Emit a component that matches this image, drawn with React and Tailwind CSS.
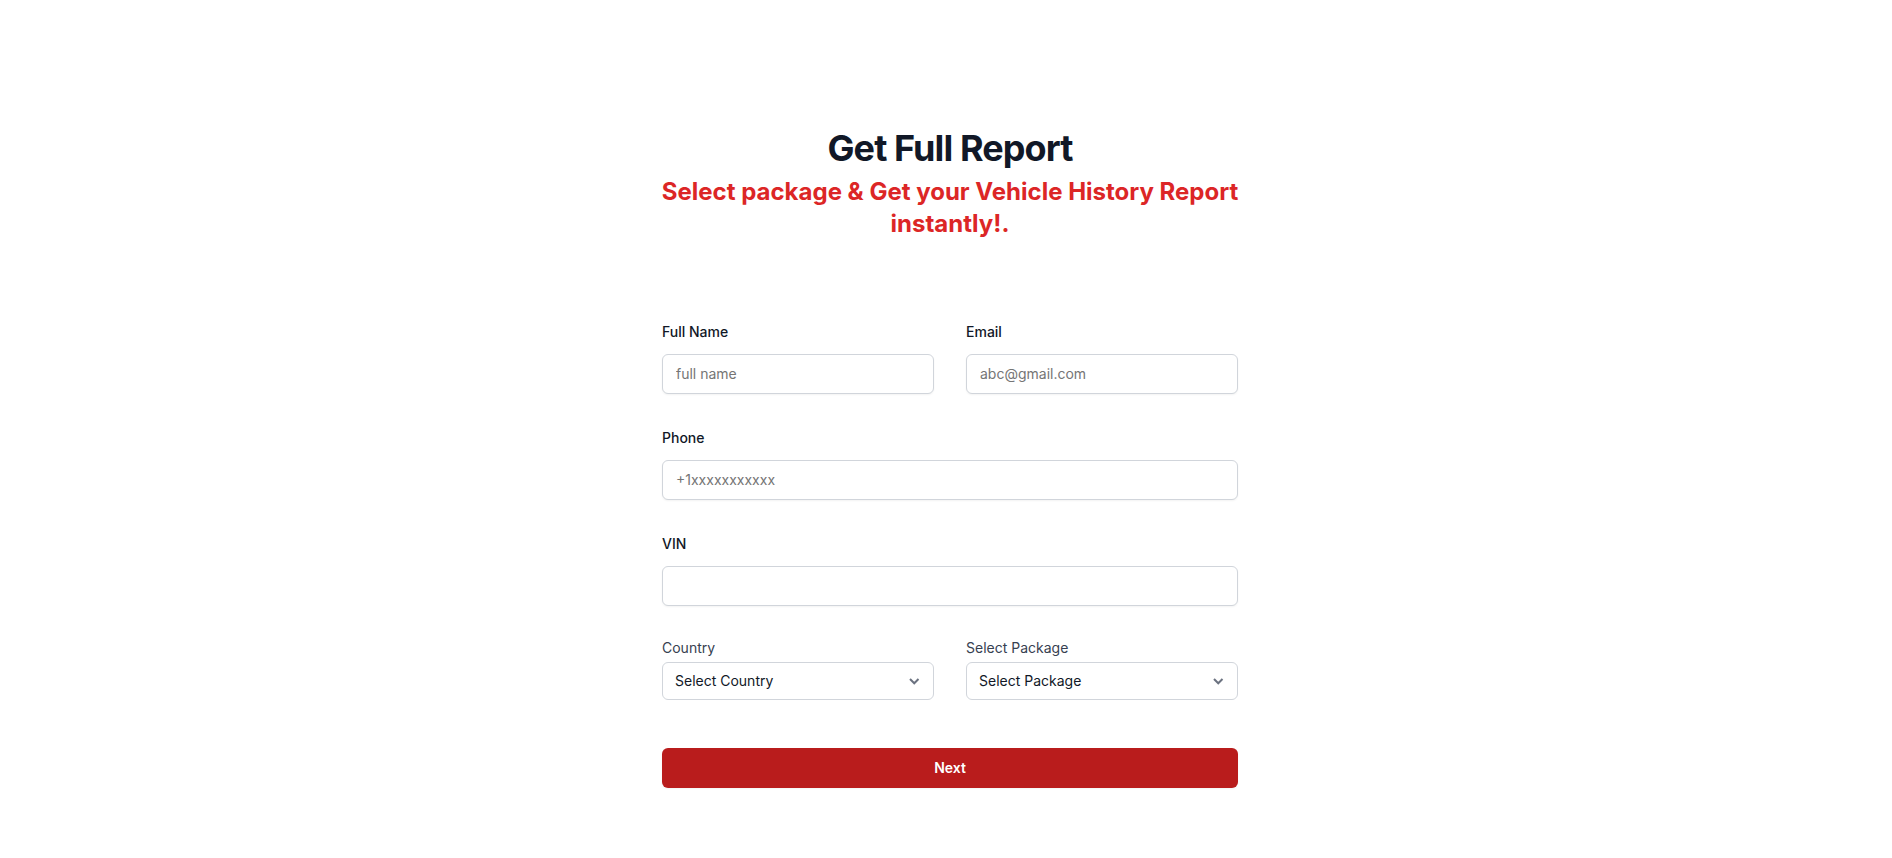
import React from "react";

function Field({ id, label, type = "text", placeholder, wide = false }) {
  return (
    <div className={wide ? "sm:col-span-2" : ""}>
      <label htmlFor={id} className="block text-sm/6 font-medium text-[#111827]">
        {label}
      </label>
      <input
        id={id}
        name={id}
        type={type}
        placeholder={placeholder}
        className="mt-2.5 block h-10 w-full rounded-md border border-[#d1d5db] bg-white px-[13px] pb-0.5 text-sm text-[#111827] shadow-[0_1px_2px_0_rgba(0,0,0,0.05)] placeholder:text-[#757575]"
      />
    </div>
  );
}

function SelectField({ id, label, options }) {
  return (
    <div>
      <label htmlFor={id} className="block text-sm/5 text-[#374151]">
        {label}
      </label>
      <div className="relative mt-1">
        <select
          id={id}
          name={id}
          className="block h-[38px] w-full appearance-none rounded-md border border-[#d1d5db] bg-white pr-10 pl-3 text-sm text-[#111827]"
        >
          {options.map((option) => (
            <option key={option}>{option}</option>
          ))}
        </select>
        <svg
          className="pointer-events-none absolute inset-y-0 right-2.5 my-auto size-5"
          viewBox="0 0 20 20"
          fill="none"
          stroke="#6b7280"
          strokeWidth="2"
          aria-hidden="true"
        >
          <path d="M6 8l4.25 4.25L14.5 8" />
        </svg>
      </div>
    </div>
  );
}

export default function App() {
  return (
    <main className="min-h-screen bg-white pt-32 pr-6 pb-16 pl-8 font-['Inter',sans-serif]">
      <header className="mx-auto max-w-2xl text-center">
        <h1 className="text-4xl/10 font-bold tracking-tight text-[#111827]">Get Full Report</h1>
        <p className="mt-2 text-2xl/8 font-bold text-[#dc2626]">
          Select package &amp; Get your Vehicle History Report instantly!.
        </p>
      </header>
      <form className="mx-auto mt-20 max-w-xl" onSubmit={(event) => event.preventDefault()}>
        <div className="grid grid-cols-1 gap-8 sm:grid-cols-2">
          <Field id="full-name" label="Full Name" placeholder="full name" />
          <Field id="email" label="Email" type="email" placeholder="abc@gmail.com" />
          <Field id="phone" label="Phone" type="tel" placeholder="+1xxxxxxxxxxx" wide />
          <Field id="vin" label="VIN" wide />
          <SelectField id="country" label="Country" options={["Select Country"]} />
          <SelectField id="package" label="Select Package" options={["Select Package"]} />
        </div>
        <button
          type="submit"
          className="mt-12 block h-10 w-full rounded-md bg-[#b91c1c] text-center text-sm font-semibold text-white shadow-[0_1px_2px_0_rgba(0,0,0,0.05)]"
        >
          Next
        </button>
      </form>
    </main>
  );
}
